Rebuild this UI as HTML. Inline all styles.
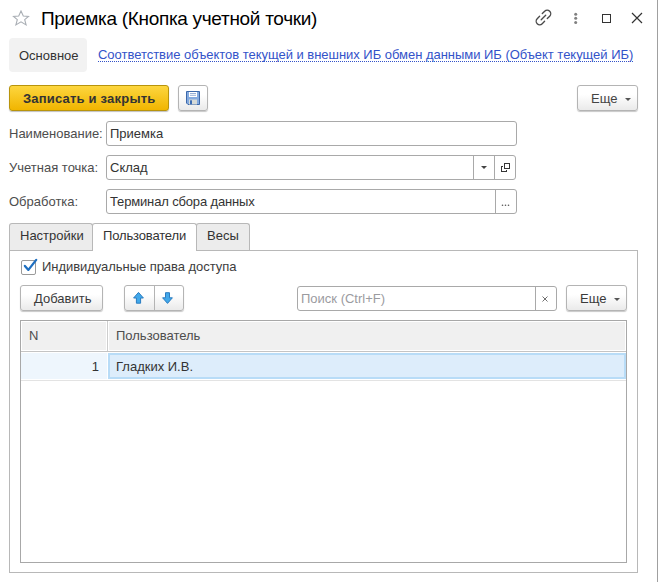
<!DOCTYPE html>
<html><head><meta charset="utf-8">
<style>
*{box-sizing:border-box;margin:0;padding:0}
html,body{width:658px;height:582px;overflow:hidden;background:#fff}
body{position:relative;font-family:"Liberation Sans",sans-serif;font-size:13px;color:#333}
.abs{position:absolute}
.title{left:41px;top:7px;font-size:19px;letter-spacing:-0.3px;color:#000;white-space:nowrap;line-height:24px}
.star{left:12px;top:10px}
.rline{left:657px;top:0;width:1px;height:582px;background:#a0a0a0}
.tab0{left:9px;top:38px;width:78px;height:34px;background:#f2f2f2;border-radius:4px}
.tab0 span{position:absolute;left:10px;top:10px;line-height:15px;color:#333}
.link{left:98px;top:47px;height:15px;color:#3353c9;white-space:nowrap;line-height:15px;letter-spacing:-0.03px;border-bottom:1px dotted #3353c9}
.btn{position:absolute;border:1px solid #b4b4b4;border-radius:3px;background:linear-gradient(#fff 35%,#eaeaea);box-shadow:0 1px 1px rgba(0,0,0,.22);color:#3a3a3a}
.ybtn{left:9px;top:85px;width:160px;height:26px;border:1px solid #b8940c;border-radius:3px;background:linear-gradient(#fdd63f,#f1b500);box-shadow:0 1px 1px rgba(0,0,0,.25);font-weight:bold;color:#333}
.ybtn span{position:absolute;left:13px;top:5px;line-height:15px;letter-spacing:0.2px;white-space:nowrap}
.lbl{position:absolute;left:9px;line-height:15px;color:#4d4d4d}
.fld{position:absolute;left:106px;height:25px;border:1px solid #a9a9a9;border-radius:3px;background:#fff}
.fld span{position:absolute;left:3px;top:4px;line-height:15px;color:#333}
.tabs .t{position:absolute;top:223px;height:28px;border:1px solid #b8b8b8;border-bottom:none;border-radius:3px 3px 0 0;background:#ececec}
.tabs .t span{position:absolute;top:4px;line-height:15px;color:#333}
.panel{left:9px;top:250px;width:629px;height:323px;border:1px solid #b8b8b8;border-top:1px solid #b8b8b8}
</style></head><body>
<div class="abs rline"></div>
<svg class="abs star" width="18" height="17" viewBox="0 0 18 17"><path d="M9 1 L11.3 6 L16.5 6.4 L12.7 9.6 L14.1 14.9 L9 11.8 L3.9 14.9 L5.3 9.6 L1.5 6.4 L6.7 6 Z" fill="none" stroke="#a9aeb4" stroke-width="1.1" stroke-linejoin="miter"/></svg>
<div class="abs title">Приемка (Кнопка учетной точки)</div>
<!-- window buttons -->
<svg class="abs" style="left:530px;top:4px" width="30" height="26" viewBox="0 0 30 26"><g fill="none" stroke="#4a4a4a" stroke-width="1.35" stroke-linecap="round"><path d="M9.6 12.3 L7.22 14.68 A3.535 3.535 0 0 0 12.22 19.68 L14.6 17.3"/><path d="M12.3 9.6 L14.68 7.22 A3.535 3.535 0 0 1 19.68 12.22 L17.3 14.6"/><path d="M11.2 15.7 L15.7 11.2"/></g></svg>
<svg class="abs" style="left:570px;top:8px" width="10" height="20" viewBox="0 0 10 20"><g fill="#808080"><circle cx="5.7" cy="6.3" r="1.5"/><circle cx="5.7" cy="10.2" r="1.5"/><circle cx="5.7" cy="14.5" r="1.5"/></g></svg>
<div class="abs" style="left:602px;top:14px;width:9px;height:9px;border:1.5px solid #333"></div>
<svg class="abs" style="left:630px;top:11px" width="14" height="14" viewBox="0 0 14 14"><path d="M2 2 L12 12 M12 2 L2 12" stroke="#333" stroke-width="1.2"/></svg>

<div class="abs tab0"><span>Основное</span></div>
<div class="abs link">Соответствие объектов текущей и внешних ИБ обмен данными ИБ (Объект текущей ИБ)</div>

<div class="abs ybtn"><span>Записать и закрыть</span></div>
<div class="btn" style="left:178px;top:85px;width:30px;height:26px">
<svg class="abs" style="left:7px;top:5px" width="14" height="14" viewBox="0 0 14 14"><path d="M0.5 0.5 H13.5 V13.5 H2 L0.5 12 Z" fill="#84aadf" stroke="#3c68aa"/><rect x="3" y="1" width="8" height="5" fill="#fff"/><path d="M4 2.5 H10 M4 4.3 H10" stroke="#7d9ccc" stroke-width="0.8"/><rect x="3" y="8.5" width="8" height="5" fill="#d6dad7"/><rect x="4" y="9.3" width="2" height="4" fill="#3c6cb3"/></svg>
</div>
<div class="btn" style="left:577px;top:85px;width:61px;height:26px"><span class="abs" style="left:13px;top:5px;line-height:15px;color:#444">Еще</span><svg class="abs" style="left:47px;top:12px" width="6" height="4"><path d="M0 0 H6 L3 3Z" fill="#555"/></svg></div>

<div class="lbl" style="top:126px">Наименование:</div>
<div class="fld" style="top:121px;width:411px"><span>Приемка</span></div>
<div class="lbl" style="top:160px">Учетная точка:</div>
<div class="fld" style="top:155px;width:410px"><span>Склад</span>
<div class="abs" style="left:366px;top:0;width:1px;height:23px;background:#a9a9a9"></div>
<div class="abs" style="left:387px;top:0;width:1px;height:23px;background:#a9a9a9"></div>
<svg class="abs" style="left:374px;top:10px" width="6" height="4"><path d="M0 0 H6 L3 3Z" fill="#444"/></svg>

</div>
<div class="lbl" style="top:194px">Обработка:</div>
<div class="fld" style="top:189px;width:411px"><span style="letter-spacing:-0.15px">Терминал сбора данных</span>
<div class="abs" style="left:388px;top:0;width:1px;height:23px;background:#a9a9a9"></div>

</div>

<svg class="abs" style="left:500px;top:162px" width="12" height="12" viewBox="0 0 12 12"><g fill="none" stroke="#363636" stroke-width="1" shape-rendering="crispEdges"><rect x="4.5" y="1.5" width="5" height="5"/><path d="M3 4.5 H1.5 V9.5 H6.5 V8"/></g></svg>
<svg class="abs" style="left:500px;top:202px" width="12" height="6" viewBox="0 0 12 6"><g fill="#555"><circle cx="2.5" cy="3.3" r="0.8"/><circle cx="5.5" cy="3.3" r="0.8"/><circle cx="8.5" cy="3.3" r="0.8"/></g></svg>
<div class="tabs">
<div class="t" style="left:9px;width:84px"><span style="left:10px">Настройки</span></div>
<div class="t" style="left:196px;width:54px"><span style="left:10px">Весы</span></div>
</div>
<div class="abs panel"></div>
<div class="abs" style="left:92px;top:223px;width:105px;height:28px;border:1px solid #b8b8b8;border-bottom:none;border-radius:3px 3px 0 0;background:#fff"><span class="abs" style="left:10px;top:4px;line-height:15px;letter-spacing:-0.15px">Пользователи</span></div>


<!-- panel content -->
<div class="abs" style="left:21px;top:260px;width:15px;height:15px;border:1px solid #9a9a9a;border-radius:2px;background:#fff"></div>
<svg class="abs" style="left:16px;top:252px" width="30" height="28" viewBox="0 0 30 28"><path d="M8.9 13.9 L12.4 17.9 L20.2 7.9" fill="none" stroke="#1f6fc0" stroke-width="2.3" stroke-linecap="round" stroke-linejoin="round"/></svg>
<div class="abs" style="left:42px;top:259px;line-height:15px;color:#3d3d3d;letter-spacing:-0.05px;white-space:nowrap">Индивидуальные права доступа</div>

<div class="btn" style="left:20px;top:285px;width:83px;height:26px"><span class="abs" style="left:13px;top:5px;line-height:15px">Добавить</span></div>
<div class="btn" style="left:124px;top:285px;width:60px;height:26px">
<div class="abs" style="left:29px;top:0;width:1px;height:24px;background:#b4b4b4"></div>
</div>
<svg class="abs" style="left:124px;top:285px" width="60" height="26" viewBox="0 0 60 26"><g fill="#41a8ea" stroke="#2b7cc0" stroke-width="1" stroke-linejoin="miter"><path d="M14.5 7.4 L19.4 13 H16.6 V18.2 H12.4 V13 H9.6 Z"/><path d="M41.5 7.7 H45.5 V12.8 H48.4 L43.5 18.4 L38.6 12.8 H41.5 Z"/></g></svg>
<div class="abs" style="left:297px;top:286px;width:260px;height:25px;border:1px solid #a9a9a9;border-radius:3px;background:#fff">
<span class="abs" style="left:3px;top:4px;line-height:15px;color:#9b9b9f">Поиск (Ctrl+F)</span>
<div class="abs" style="left:237px;top:0;width:1px;height:23px;background:#a9a9a9"></div>
<svg class="abs" style="left:243px;top:8px" width="8" height="8" viewBox="0 0 8 8"><path d="M1.5 1.5 L6.5 6.5 M6.5 1.5 L1.5 6.5" stroke="#707070" stroke-width="1"/></svg>
</div>
<div class="btn" style="left:566px;top:285px;width:61px;height:26px"><span class="abs" style="left:13px;top:5px;line-height:15px">Еще</span><svg class="abs" style="left:47px;top:12px" width="6" height="4"><path d="M0 0 H6 L3 3Z" fill="#555"/></svg></div>

<div class="abs" style="left:20px;top:320px;width:607px;height:243px;border:1px solid #a8a8a8;background:#fff">
<div class="abs" style="left:0;top:0;width:86px;height:30px;background:#f0f0f0;box-shadow:inset 1px 1px 0 #fff,inset -1px -1px 0 #fff"></div>
<div class="abs" style="left:87px;top:0;width:518px;height:30px;background:#f0f0f0;box-shadow:inset 1px 1px 0 #fff,inset -1px -1px 0 #fff"></div>
<div class="abs" style="left:86px;top:0;width:1px;height:30px;background:#cdcdcd"></div>
<div class="abs" style="left:0;top:30px;width:605px;height:1px;background:#c4c4c4"></div>
<span class="abs" style="left:8px;top:7px;line-height:15px;color:#4d4d4d">N</span>
<span class="abs" style="left:95px;top:7px;line-height:15px;color:#4d4d4d">Пользователь</span>
<div class="abs" style="left:0;top:32px;width:86px;height:26px;background:#eef6fd"></div>
<div class="abs" style="left:87px;top:32px;width:518px;height:26px;background:#ddedfb;border:2px solid #b8dcf7"></div>
<div class="abs" style="left:0;top:59px;width:605px;height:1px;background:#e3e3e3"></div>
<span class="abs" style="left:70px;top:38px;width:8px;text-align:right;line-height:15px;color:#333">1</span>
<span class="abs" style="left:95px;top:38px;line-height:15px;color:#333">Гладких И.В.</span>
</div>
</body></html>
